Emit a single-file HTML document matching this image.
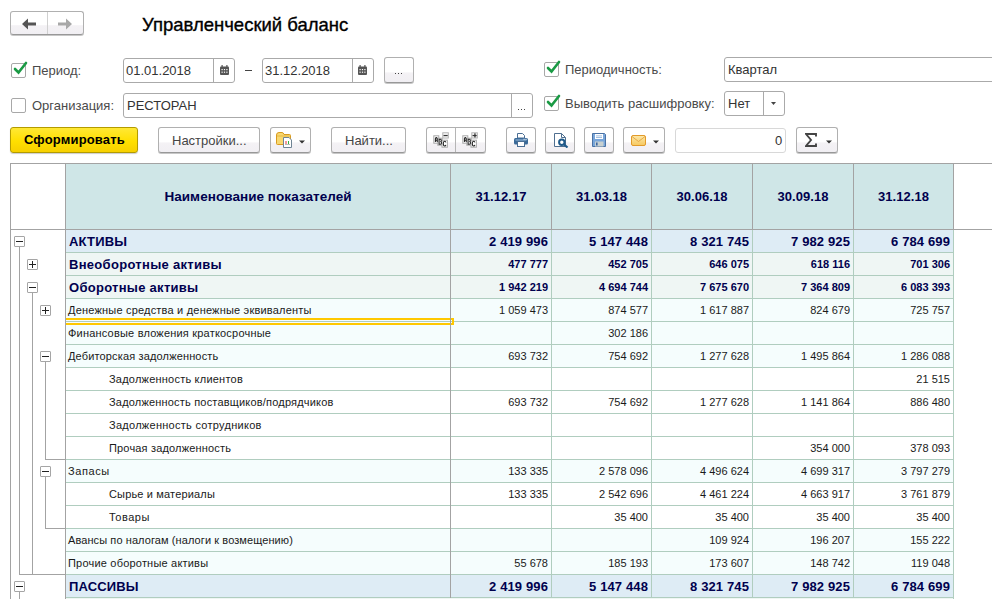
<!DOCTYPE html>
<html><head><meta charset="utf-8">
<style>
*{box-sizing:border-box;margin:0;padding:0}
html,body{width:992px;height:599px;overflow:hidden;background:#fff;font-family:"Liberation Sans",sans-serif}
.a{position:absolute}
.t{position:absolute;white-space:nowrap;line-height:1}
.btn{position:absolute;border:1px solid #b0b0b0;border-bottom-color:#989898;border-radius:3px;background:linear-gradient(#ffffff 0%,#ffffff 58%,#f4f2f5 62%,#f1eff3 100%);box-shadow:0 1px 0 rgba(0,0,0,0.22)}
.inp{position:absolute;border:1px solid #aaa;border-radius:3px;background:#fff}
.cb{position:absolute;width:15px;height:15px;border:1px solid #a8a8a8;border-radius:2px;background:#fff}
.lbl{font-size:13px;color:#4a4a4a}
.hd{font-size:13.5px;font-weight:bold;color:#00004e;line-height:13px;margin-top:0px;letter-spacing:0.05px}
.nb{font-size:13px;font-weight:bold;color:#00004e;line-height:23px;margin-top:1px;letter-spacing:0.3px}
.nr{font-size:11px;color:#1a1a1a;line-height:23px;margin-top:1px;letter-spacing:0.2px}
.vb13{font-size:13px;font-weight:bold;color:#00004e;line-height:23px;margin-top:1px;letter-spacing:0.12px}
.vb11{font-size:11px;font-weight:bold;color:#00004e;line-height:23px;margin-top:1px}
.vr{font-size:11px;color:#1a1a1a;line-height:23px;margin-top:1px}
.tb{position:absolute;width:11px;height:11px;border:1px solid #a5a5a5;border-radius:1px;background:#fff}
</style></head><body>

<!-- nav -->
<div class="btn" style="left:10px;top:11px;width:74px;height:24px"></div>
<div class="a" style="left:47px;top:12px;width:1px;height:22px;background:#d0d0d0"></div>
<svg class="a" style="left:22px;top:17.5px" width="15" height="12" viewBox="0 0 15 12"><path d="M0 6 L6 0.5 L6 4.5 L14 4.5 L14 7.5 L6 7.5 L6 11.5 Z" fill="#555"/></svg>
<svg class="a" style="left:58px;top:17.5px" width="15" height="12" viewBox="0 0 15 12"><path d="M14 6 L8 0.5 L8 4.5 L0 4.5 L0 7.5 L8 7.5 L8 11.5 Z" fill="#a8a8a8"/></svg>

<div class="t" style="left:142px;top:15.5px;font-size:18.5px;color:#000;-webkit-text-stroke:0.35px #000">Управленческий баланс</div>

<!-- row: period -->
<div class="cb" style="left:11px;top:63px"></div>
<svg class="a" style="left:12px;top:55px" width="16" height="20" viewBox="0 0 16 20"><path d="M3 14 L6.5 17.5 L14 8" stroke="#1a9a44" stroke-width="2.6" fill="none" stroke-linecap="round"/></svg>
<div class="t lbl" style="left:32px;top:63.5px">Период:</div>

<div class="inp" style="left:123px;top:58px;width:112px;height:25px"></div>
<div class="a" style="left:213px;top:59px;width:1px;height:23px;background:#aaa"></div>
<div class="t" style="left:126px;top:64px;font-size:13px;color:#333">01.01.2018</div>
<svg class="a cal" style="left:220px;top:65px" width="9" height="10" viewBox="0 0 9 10"><rect x="0" y="1.5" width="9" height="8.5" rx="1" fill="#555"/><rect x="1.5" y="0" width="1.2" height="2.5" fill="#555"/><rect x="6.3" y="0" width="1.2" height="2.5" fill="#555"/><g fill="#fff"><rect x="1.5" y="4" width="1.2" height="1.2"/><rect x="3.9" y="4" width="1.2" height="1.2"/><rect x="6.3" y="4" width="1.2" height="1.2"/><rect x="1.5" y="6.6" width="1.2" height="1.2"/><rect x="3.9" y="6.6" width="1.2" height="1.2"/><rect x="6.3" y="6.6" width="1.2" height="1.2"/></g></svg>
<div class="a" style="left:245px;top:70px;width:7px;height:1px;background:#444"></div>

<div class="inp" style="left:262px;top:58px;width:112px;height:25px"></div>
<div class="a" style="left:352px;top:59px;width:1px;height:23px;background:#aaa"></div>
<div class="t" style="left:265px;top:64px;font-size:13px;color:#333">31.12.2018</div>
<svg class="a" style="left:358px;top:65px" width="9" height="10" viewBox="0 0 9 10"><rect x="0" y="1.5" width="9" height="8.5" rx="1" fill="#555"/><rect x="1.5" y="0" width="1.2" height="2.5" fill="#555"/><rect x="6.3" y="0" width="1.2" height="2.5" fill="#555"/><g fill="#fff"><rect x="1.5" y="4" width="1.2" height="1.2"/><rect x="3.9" y="4" width="1.2" height="1.2"/><rect x="6.3" y="4" width="1.2" height="1.2"/><rect x="1.5" y="6.6" width="1.2" height="1.2"/><rect x="3.9" y="6.6" width="1.2" height="1.2"/><rect x="6.3" y="6.6" width="1.2" height="1.2"/></g></svg>

<div class="btn" style="left:384px;top:57px;width:30px;height:26px"></div>
<div class="a" style="left:395px;top:73px;width:1px;height:1px;background:#444;box-shadow:3px 0 #444,6px 0 #444"></div>

<!-- row: org -->
<div class="cb" style="left:11px;top:98px"></div>
<div class="t lbl" style="left:32px;top:98.5px">Организация:</div>
<div class="inp" style="left:123px;top:93px;width:410px;height:25px"></div>
<div class="a" style="left:511px;top:94px;width:1px;height:23px;background:#aaa"></div>
<div class="t" style="left:127px;top:99px;font-size:13px;color:#333">РЕСТОРАН</div>
<div class="a" style="left:518px;top:109px;width:1px;height:1px;background:#444;box-shadow:3px 0 #444,6px 0 #444"></div>

<!-- right side -->
<div class="cb" style="left:544px;top:62px"></div>
<svg class="a" style="left:545px;top:54px" width="16" height="20" viewBox="0 0 16 20"><path d="M3 14 L6.5 17.5 L14 8" stroke="#1a9a44" stroke-width="2.6" fill="none" stroke-linecap="round"/></svg>
<div class="t lbl" style="left:565px;top:62.5px">Периодичность:</div>
<div class="inp" style="left:724px;top:57px;width:290px;height:25px"></div>
<div class="t" style="left:728px;top:63px;font-size:13px;color:#333">Квартал</div>

<div class="cb" style="left:544px;top:96px"></div>
<svg class="a" style="left:545px;top:88px" width="16" height="20" viewBox="0 0 16 20"><path d="M3 14 L6.5 17.5 L14 8" stroke="#1a9a44" stroke-width="2.6" fill="none" stroke-linecap="round"/></svg>
<div class="t lbl" style="left:565px;top:96.5px">Выводить расшифровку:</div>
<div class="inp" style="left:724px;top:91px;width:61px;height:25px"></div>
<div class="a" style="left:763px;top:92px;width:1px;height:23px;background:#aaa"></div>
<div class="t" style="left:728px;top:97px;font-size:13px;color:#333">Нет</div>
<svg class="a" style="left:771px;top:102px" width="5" height="3" viewBox="0 0 5 3"><path d="M0 0 L5 0 L2.5 3 Z" fill="#444"/></svg>

<!-- toolbar -->
<div class="a" style="left:10px;top:127px;width:128px;height:26px;border:1px solid #b39b00;border-radius:3px;background:linear-gradient(#ffe835,#ffdf00 55%,#f7d000);box-shadow:0 1px 1px rgba(0,0,0,0.2)"></div>
<div class="t" style="left:24px;top:133px;font-size:13px;font-weight:bold;color:#000;letter-spacing:0.15px">Сформировать</div>

<div class="btn" style="left:158px;top:127px;width:102px;height:26px"></div>
<div class="t lbl" style="left:172px;top:133.5px;font-size:13px;color:#444">Настройки...</div>

<div class="btn" style="left:270px;top:127px;width:41px;height:26px"></div>
<div class="btn" style="left:331px;top:127px;width:75px;height:26px"></div>
<div class="t lbl" style="left:345px;top:133.5px;font-size:13px;color:#444">Найти...</div>

<div class="btn" style="left:426px;top:127px;width:60px;height:26px"></div>
<div class="a" style="left:455px;top:128px;width:1px;height:24px;background:#b5b5b5"></div>
<div class="btn" style="left:506px;top:127px;width:30px;height:26px"></div>
<div class="btn" style="left:545px;top:127px;width:30px;height:26px"></div>
<div class="btn" style="left:584px;top:127px;width:30px;height:26px"></div>
<div class="btn" style="left:623px;top:127px;width:42px;height:26px"></div>
<div class="inp" style="left:675px;top:128px;width:111px;height:25px;border-color:#d8d8d8"></div>
<div class="t" style="left:775px;top:134px;font-size:13px;color:#333">0</div>
<div class="btn" style="left:796px;top:127px;width:42px;height:26px"></div>

<!-- icons -->
<svg class="a" style="left:276px;top:132px" width="17" height="16" viewBox="0 0 17 16">
<path d="M0.5 3 Q0.5 0.5 3 0.5 L6 0.5 Q7.5 0.5 8 2.5 L13.5 2.5 Q14.5 2.5 14.5 3.5 L14.5 11.5 Q14.5 12.5 13.5 12.5 L1.5 12.5 Q0.5 12.5 0.5 11.5 Z" fill="#f8d870" stroke="#d89a20" stroke-width="1"/>
<path d="M1 4 L14 4" stroke="#e8b840" stroke-width="1"/>
<path d="M7.5 5.5 L13 5.5 L15.5 8 L15.5 15.5 L7.5 15.5 Z" fill="#fff" stroke="#6f8494" stroke-width="1"/>
<rect x="9.5" y="9" width="1" height="3" fill="#e83030"/><rect x="12" y="9" width="1" height="3" fill="#30b040"/>
<rect x="9" y="12" width="5" height="0.6" fill="#8a8a8a"/>
</svg>
<svg class="a" style="left:299px;top:140px" width="6" height="4" viewBox="0 0 6 4"><path d="M0 0.5 L6 0.5 L3 3.5 Z" fill="#333"/></svg>

<svg class="a" style="left:433px;top:132px" width="16" height="16" viewBox="0 0 16 16">
<rect x="0.8" y="3.8" width="5" height="7.4" fill="#fff" stroke="#a8a8a8"/>
<rect x="4.8" y="6.2" width="4.4" height="7" fill="#fff" stroke="#a8a8a8"/>
<rect x="9" y="8.2" width="5.4" height="7" fill="#fff" stroke="#a8a8a8"/>
<rect x="9.8" y="0.8" width="5.5" height="5.2" fill="#fff" stroke="#b0b0b0"/>
<path d="M2.4 10 L2.4 6.6 Q3.3 4.6 4.2 6.6 L4.2 10 M2.4 8.3 L4.2 8.3" stroke="#222" stroke-width="1.05" fill="none"/>
<path d="M6.1 12.2 L6.1 7.2 L7.4 7.2 Q8.3 7.2 8.3 8.4 Q8.3 9.5 7.3 9.5 Q8.5 9.5 8.5 10.8 Q8.5 12.2 7.4 12.2 Z" stroke="#222" stroke-width="1.05" fill="none"/>
<path d="M12.9 10.3 Q12.7 9.2 11.6 9.2 Q10.3 9.2 10.3 11.5 Q10.3 13.9 11.6 13.9 Q12.7 13.9 12.9 12.8" stroke="#222" stroke-width="1.05" fill="none"/>
<rect x="10.5" y="2.9" width="4.2" height="1.3" fill="#333"/>
</svg>
<svg class="a" style="left:462px;top:132px" width="16" height="16" viewBox="0 0 16 16">
<rect x="0.8" y="3.8" width="5" height="7.4" fill="#fff" stroke="#a8a8a8"/>
<rect x="4.8" y="6.2" width="4.4" height="7" fill="#fff" stroke="#a8a8a8"/>
<rect x="9" y="8.2" width="5.4" height="7" fill="#fff" stroke="#a8a8a8"/>
<rect x="9.8" y="0.8" width="5.5" height="5.2" fill="#fff" stroke="#b0b0b0"/>
<path d="M2.4 10 L2.4 6.6 Q3.3 4.6 4.2 6.6 L4.2 10 M2.4 8.3 L4.2 8.3" stroke="#222" stroke-width="1.05" fill="none"/>
<path d="M6.1 12.2 L6.1 7.2 L7.4 7.2 Q8.3 7.2 8.3 8.4 Q8.3 9.5 7.3 9.5 Q8.5 9.5 8.5 10.8 Q8.5 12.2 7.4 12.2 Z" stroke="#222" stroke-width="1.05" fill="none"/>
<path d="M12.9 10.3 Q12.7 9.2 11.6 9.2 Q10.3 9.2 10.3 11.5 Q10.3 13.9 11.6 13.9 Q12.7 13.9 12.9 12.8" stroke="#222" stroke-width="1.05" fill="none"/>
<rect x="10.5" y="2.9" width="4.2" height="1.3" fill="#333"/><rect x="12.3" y="1.3" width="1.3" height="4.2" fill="#333"/>
</svg>

<svg class="a" style="left:513px;top:133px" width="16" height="14" viewBox="0 0 16 14">
<path d="M4.5 0.5 L9.5 0.5 L11.5 2.5 L11.5 5 L4.5 5 Z" fill="#fff" stroke="#4a6e94"/>
<rect x="1" y="5" width="14" height="6.5" rx="1.5" fill="#3b6a98"/>
<rect x="2.5" y="6.5" width="11" height="1" fill="#9fc0e0"/>
<rect x="10.5" y="5.8" width="1.2" height="0.8" fill="#fff"/><rect x="12.5" y="5.8" width="1.2" height="0.8" fill="#fff"/>
<rect x="4.5" y="8.5" width="7" height="5" fill="#fff" stroke="#4a6e94"/>
</svg>

<svg class="a" style="left:554px;top:133px" width="15" height="15" viewBox="0 0 15 15">
<path d="M0.5 0.5 L7.5 0.5 L11.5 4.5 L11.5 13.5 L0.5 13.5 Z" fill="#fff" stroke="#4f6f90"/>
<path d="M7.5 0.5 L7.5 4.5 L11.5 4.5" fill="none" stroke="#4f6f90"/>
<circle cx="7.8" cy="9.2" r="2.7" fill="#fff" stroke="#1f5a8a" stroke-width="2"/>
<path d="M9.8 11.2 L13.5 14.5" stroke="#1f5a8a" stroke-width="2.2"/>
</svg>

<svg class="a" style="left:592px;top:133px" width="14" height="14" viewBox="0 0 14 14">
<path d="M0.5 0.5 L12.5 0.5 L13.5 1.5 L13.5 13.5 L0.5 13.5 Z" fill="#79a6da" stroke="#4a72a4"/>
<rect x="3" y="1" width="8" height="5" fill="#fff"/>
<rect x="4" y="2.5" width="6" height="0.8" fill="#8aaed8"/><rect x="4" y="4.2" width="6" height="0.8" fill="#8aaed8"/>
<rect x="3" y="8.5" width="8.5" height="5" fill="#c8d0d0"/>
<rect x="4" y="9.5" width="1.6" height="3" fill="#3a64a0"/>
</svg>

<svg class="a" style="left:631px;top:135px" width="15" height="11" viewBox="0 0 15 11">
<defs><linearGradient id="eg" x1="0" y1="0" x2="0" y2="1"><stop offset="0" stop-color="#fde9a8"/><stop offset="1" stop-color="#f6c860"/></linearGradient></defs>
<rect x="0.5" y="0.5" width="14" height="10" rx="1.5" fill="url(#eg)" stroke="#e29a2a"/>
<path d="M1 1.5 L7.5 6.5 L14 1.5" fill="none" stroke="#e2a040" stroke-width="0.9"/>
</svg>
<svg class="a" style="left:653px;top:140px" width="6" height="4" viewBox="0 0 6 4"><path d="M0 0.5 L6 0.5 L3 3.5 Z" fill="#333"/></svg>

<svg class="a" style="left:805px;top:133px" width="12" height="14" viewBox="0 0 12 14">
<path d="M11 3.5 L11 1 L1 1 L6 7 L1 13 L11 13 L11 10.5" fill="none" stroke="#444" stroke-width="1.9" stroke-linejoin="miter"/>
</svg>
<svg class="a" style="left:826px;top:140px" width="6" height="4" viewBox="0 0 6 4"><path d="M0 0.5 L6 0.5 L3 3.5 Z" fill="#333"/></svg>

<!-- table -->
<div class="a" style="left:10px;top:163px;width:982px;height:1px;background:#a3a3a3"></div>
<div class="a" style="left:66px;top:164px;width:887px;height:65px;background:#cfe6e7"></div>
<div class="a" style="left:10px;top:229px;width:982px;height:1px;background:#a3a3a3"></div>
<div class="a" style="left:10px;top:163px;width:1px;height:436px;background:#a3a3a3"></div>
<div class="a" style="left:65px;top:164px;width:1px;height:65px;background:#a3a3a3"></div>
<div class="a" style="left:450px;top:164px;width:1px;height:65px;background:#a3a3a3"></div>
<div class="a" style="left:551px;top:164px;width:1px;height:65px;background:#a3a3a3"></div>
<div class="a" style="left:651px;top:164px;width:1px;height:65px;background:#a3a3a3"></div>
<div class="a" style="left:752px;top:164px;width:1px;height:65px;background:#a3a3a3"></div>
<div class="a" style="left:853px;top:164px;width:1px;height:65px;background:#a3a3a3"></div>
<div class="a" style="left:953px;top:164px;width:1px;height:65px;background:#a3a3a3"></div>
<div class="t hd" style="left:66px;width:384px;top:190px;text-align:center">Наименование показателей</div>
<div class="t hd" style="left:451px;width:100px;top:190px;text-align:center;font-size:13px">31.12.17</div>
<div class="t hd" style="left:552px;width:99px;top:190px;text-align:center;font-size:13px">31.03.18</div>
<div class="t hd" style="left:652px;width:100px;top:190px;text-align:center;font-size:13px">30.06.18</div>
<div class="t hd" style="left:753px;width:100px;top:190px;text-align:center;font-size:13px">30.09.18</div>
<div class="t hd" style="left:854px;width:99px;top:190px;text-align:center;font-size:13px">31.12.18</div>
<div class="a" style="left:66px;top:230px;width:887px;height:22px;background:#deecf5"></div>
<div class="a" style="left:66px;top:252px;width:887px;height:1px;background:#b0cdbf"></div>
<div class="t nb" style="left:69px;top:229px;letter-spacing:0.2px">АКТИВЫ</div>
<div class="t vb13" style="right:444px;top:229px">2 419 996</div>
<div class="t vb13" style="right:344px;top:229px">5 147 448</div>
<div class="t vb13" style="right:243px;top:229px">8 321 745</div>
<div class="t vb13" style="right:142px;top:229px">7 982 925</div>
<div class="t vb13" style="right:42px;top:229px">6 784 699</div>
<div class="a" style="left:66px;top:253px;width:887px;height:22px;background:#eff6f4"></div>
<div class="a" style="left:66px;top:275px;width:887px;height:1px;background:#b0cdbf"></div>
<div class="t nb" style="left:69px;top:252px;letter-spacing:0.3px">Внеоборотные активы</div>
<div class="t vb11" style="right:444px;top:252px">477 777</div>
<div class="t vb11" style="right:344px;top:252px">452 705</div>
<div class="t vb11" style="right:243px;top:252px">646 075</div>
<div class="t vb11" style="right:142px;top:252px">618 116</div>
<div class="t vb11" style="right:42px;top:252px">701 306</div>
<div class="a" style="left:66px;top:276px;width:887px;height:22px;background:#eff6f4"></div>
<div class="a" style="left:66px;top:298px;width:887px;height:1px;background:#b0cdbf"></div>
<div class="t nb" style="left:69px;top:275px;letter-spacing:0.28px">Оборотные активы</div>
<div class="t vb11" style="right:444px;top:275px">1 942 219</div>
<div class="t vb11" style="right:344px;top:275px">4 694 744</div>
<div class="t vb11" style="right:243px;top:275px">7 675 670</div>
<div class="t vb11" style="right:142px;top:275px">7 364 809</div>
<div class="t vb11" style="right:42px;top:275px">6 083 393</div>
<div class="a" style="left:66px;top:299px;width:887px;height:22px;background:#f5fdfd"></div>
<div class="a" style="left:66px;top:321px;width:887px;height:1px;background:#b0cdbf"></div>
<div class="t nr" style="left:68px;top:298px;letter-spacing:0.2px">Денежные средства и денежные эквиваленты</div>
<div class="t vr" style="right:444px;top:298px">1 059 473</div>
<div class="t vr" style="right:344px;top:298px">874 577</div>
<div class="t vr" style="right:243px;top:298px">1 617 887</div>
<div class="t vr" style="right:142px;top:298px">824 679</div>
<div class="t vr" style="right:42px;top:298px">725 757</div>
<div class="a" style="left:66px;top:322px;width:887px;height:22px;background:#f5fdfd"></div>
<div class="a" style="left:66px;top:344px;width:887px;height:1px;background:#b0cdbf"></div>
<div class="t nr" style="left:68px;top:321px;letter-spacing:0.2px">Финансовые вложения краткосрочные</div>
<div class="t vr" style="right:344px;top:321px">302 186</div>
<div class="a" style="left:66px;top:345px;width:887px;height:22px;background:#f5fdfd"></div>
<div class="a" style="left:66px;top:367px;width:887px;height:1px;background:#b0cdbf"></div>
<div class="t nr" style="left:68px;top:344px;letter-spacing:0.15px">Дебиторская задолженность</div>
<div class="t vr" style="right:444px;top:344px">693 732</div>
<div class="t vr" style="right:344px;top:344px">754 692</div>
<div class="t vr" style="right:243px;top:344px">1 277 628</div>
<div class="t vr" style="right:142px;top:344px">1 495 864</div>
<div class="t vr" style="right:42px;top:344px">1 286 088</div>
<div class="a" style="left:66px;top:368px;width:887px;height:22px;background:#ffffff"></div>
<div class="a" style="left:66px;top:390px;width:887px;height:1px;background:#b0cdbf"></div>
<div class="t nr" style="left:109px;top:367px;letter-spacing:0.22px">Задолженность клиентов</div>
<div class="t vr" style="right:42px;top:367px">21 515</div>
<div class="a" style="left:66px;top:391px;width:887px;height:22px;background:#ffffff"></div>
<div class="a" style="left:66px;top:413px;width:887px;height:1px;background:#b0cdbf"></div>
<div class="t nr" style="left:109px;top:390px;letter-spacing:0.19px">Задолженность поставщиков/подрядчиков</div>
<div class="t vr" style="right:444px;top:390px">693 732</div>
<div class="t vr" style="right:344px;top:390px">754 692</div>
<div class="t vr" style="right:243px;top:390px">1 277 628</div>
<div class="t vr" style="right:142px;top:390px">1 141 864</div>
<div class="t vr" style="right:42px;top:390px">886 480</div>
<div class="a" style="left:66px;top:414px;width:887px;height:22px;background:#ffffff"></div>
<div class="a" style="left:66px;top:436px;width:887px;height:1px;background:#b0cdbf"></div>
<div class="t nr" style="left:109px;top:413px;letter-spacing:0.28px">Задолженность сотрудников</div>
<div class="a" style="left:66px;top:437px;width:887px;height:22px;background:#ffffff"></div>
<div class="a" style="left:66px;top:459px;width:887px;height:1px;background:#b0cdbf"></div>
<div class="t nr" style="left:109px;top:436px;letter-spacing:0.17px">Прочая задолженность</div>
<div class="t vr" style="right:142px;top:436px">354 000</div>
<div class="t vr" style="right:42px;top:436px">378 093</div>
<div class="a" style="left:66px;top:460px;width:887px;height:22px;background:#f5fdfd"></div>
<div class="a" style="left:66px;top:482px;width:887px;height:1px;background:#b0cdbf"></div>
<div class="t nr" style="left:68px;top:459px;letter-spacing:0.6px">Запасы</div>
<div class="t vr" style="right:444px;top:459px">133 335</div>
<div class="t vr" style="right:344px;top:459px">2 578 096</div>
<div class="t vr" style="right:243px;top:459px">4 496 624</div>
<div class="t vr" style="right:142px;top:459px">4 699 317</div>
<div class="t vr" style="right:42px;top:459px">3 797 279</div>
<div class="a" style="left:66px;top:483px;width:887px;height:22px;background:#ffffff"></div>
<div class="a" style="left:66px;top:505px;width:887px;height:1px;background:#b0cdbf"></div>
<div class="t nr" style="left:109px;top:482px;letter-spacing:0.16px">Сырье и материалы</div>
<div class="t vr" style="right:444px;top:482px">133 335</div>
<div class="t vr" style="right:344px;top:482px">2 542 696</div>
<div class="t vr" style="right:243px;top:482px">4 461 224</div>
<div class="t vr" style="right:142px;top:482px">4 663 917</div>
<div class="t vr" style="right:42px;top:482px">3 761 879</div>
<div class="a" style="left:66px;top:506px;width:887px;height:22px;background:#ffffff"></div>
<div class="a" style="left:66px;top:528px;width:887px;height:1px;background:#b0cdbf"></div>
<div class="t nr" style="left:109px;top:505px;letter-spacing:0.5px">Товары</div>
<div class="t vr" style="right:344px;top:505px">35 400</div>
<div class="t vr" style="right:243px;top:505px">35 400</div>
<div class="t vr" style="right:142px;top:505px">35 400</div>
<div class="t vr" style="right:42px;top:505px">35 400</div>
<div class="a" style="left:66px;top:529px;width:887px;height:22px;background:#f5fdfd"></div>
<div class="a" style="left:66px;top:551px;width:887px;height:1px;background:#b0cdbf"></div>
<div class="t nr" style="left:68px;top:528px;letter-spacing:0.09px">Авансы по налогам (налоги к возмещению)</div>
<div class="t vr" style="right:243px;top:528px">109 924</div>
<div class="t vr" style="right:142px;top:528px">196 207</div>
<div class="t vr" style="right:42px;top:528px">155 222</div>
<div class="a" style="left:66px;top:552px;width:887px;height:22px;background:#f5fdfd"></div>
<div class="a" style="left:66px;top:574px;width:887px;height:1px;background:#b0cdbf"></div>
<div class="t nr" style="left:68px;top:551px;letter-spacing:0.2px">Прочие оборотные активы</div>
<div class="t vr" style="right:444px;top:551px">55 678</div>
<div class="t vr" style="right:344px;top:551px">185 193</div>
<div class="t vr" style="right:243px;top:551px">173 607</div>
<div class="t vr" style="right:142px;top:551px">148 742</div>
<div class="t vr" style="right:42px;top:551px">119 048</div>
<div class="a" style="left:66px;top:575px;width:887px;height:22px;background:#deecf5"></div>
<div class="a" style="left:66px;top:597px;width:887px;height:1px;background:#b0cdbf"></div>
<div class="t nb" style="left:69px;top:574px;letter-spacing:0.13px">ПАССИВЫ</div>
<div class="t vb13" style="right:444px;top:574px">2 419 996</div>
<div class="t vb13" style="right:344px;top:574px">5 147 448</div>
<div class="t vb13" style="right:243px;top:574px">8 321 745</div>
<div class="t vb13" style="right:142px;top:574px">7 982 925</div>
<div class="t vb13" style="right:42px;top:574px">6 784 699</div>
<div class="a" style="left:65px;top:230px;width:1px;height:369px;background:#a3a3a3"></div>
<div class="a" style="left:450px;top:230px;width:1px;height:369px;background:#a3a3a3"></div>
<div class="a" style="left:551px;top:230px;width:1px;height:369px;background:#b0cdbf"></div>
<div class="a" style="left:651px;top:230px;width:1px;height:369px;background:#b0cdbf"></div>
<div class="a" style="left:752px;top:230px;width:1px;height:369px;background:#b0cdbf"></div>
<div class="a" style="left:853px;top:230px;width:1px;height:369px;background:#b0cdbf"></div>
<div class="a" style="left:953px;top:230px;width:1px;height:369px;background:#b0cdbf"></div>
<div class="a" style="left:66px;top:598px;width:887px;height:1px;background:#eff6f4"></div>
<div class="tb" style="left:14px;top:236px"></div>
<div class="a" style="left:16px;top:241px;width:7px;height:1px;background:#222"></div>
<div class="tb" style="left:27px;top:259px"></div>
<div class="a" style="left:29px;top:264px;width:7px;height:1px;background:#222"></div>
<div class="a" style="left:32px;top:261px;width:1px;height:7px;background:#222"></div>
<div class="tb" style="left:27px;top:282px"></div>
<div class="a" style="left:29px;top:287px;width:7px;height:1px;background:#222"></div>
<div class="tb" style="left:40px;top:305px"></div>
<div class="a" style="left:42px;top:310px;width:7px;height:1px;background:#222"></div>
<div class="a" style="left:45px;top:307px;width:1px;height:7px;background:#222"></div>
<div class="tb" style="left:40px;top:351px"></div>
<div class="a" style="left:42px;top:356px;width:7px;height:1px;background:#222"></div>
<div class="tb" style="left:40px;top:466px"></div>
<div class="a" style="left:42px;top:471px;width:7px;height:1px;background:#222"></div>
<div class="tb" style="left:14px;top:581px"></div>
<div class="a" style="left:16px;top:586px;width:7px;height:1px;background:#222"></div>
<div class="a" style="left:19px;top:247px;width:1px;height:328px;background:#a3a3a3"></div>
<div class="a" style="left:19px;top:574px;width:46px;height:1px;background:#a3a3a3"></div>
<div class="a" style="left:32px;top:293px;width:1px;height:282px;background:#a3a3a3"></div>
<div class="a" style="left:45px;top:362px;width:1px;height:98px;background:#a3a3a3"></div>
<div class="a" style="left:45px;top:459px;width:20px;height:1px;background:#a3a3a3"></div>
<div class="a" style="left:45px;top:477px;width:1px;height:52px;background:#a3a3a3"></div>
<div class="a" style="left:45px;top:528px;width:20px;height:1px;background:#a3a3a3"></div>
<div class="a" style="left:19px;top:592px;width:1px;height:7px;background:#a3a3a3"></div>
<div class="a" style="left:66px;top:318px;width:388px;height:2px;background:#ffc800"></div>
<div class="a" style="left:66px;top:323px;width:388px;height:2px;background:#ffc800"></div>
<div class="a" style="left:452px;top:318px;width:2px;height:7px;background:#ffc800"></div>
<div class="a" style="left:450px;top:318px;width:1px;height:7px;background:#a3a3a3"></div>
</body></html>
